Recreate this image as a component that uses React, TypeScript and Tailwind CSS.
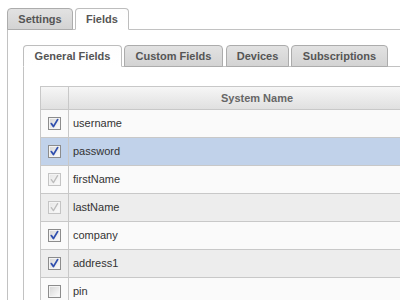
import React from "react";

type Row = { name: string; state: "checked" | "disabled" | "unchecked"; selected?: boolean };

const rows: Row[] = [
  { name: "username", state: "checked" },
  { name: "password", state: "checked", selected: true },
  { name: "firstName", state: "disabled" },
  { name: "lastName", state: "disabled" },
  { name: "company", state: "checked" },
  { name: "address1", state: "checked" },
  { name: "pin", state: "unchecked" },
];

function Check({ state }: { state: Row["state"] }) {
  const disabled = state === "disabled";
  const border = disabled ? "#c4c4c4" : "#8c8c8c";
  const id = disabled ? "gd" : "gn";
  return (
    <svg width="13" height="13" viewBox="0 0 13 13">
      <defs>
        <linearGradient id={id} x1="0" y1="0" x2="1" y2="1">
          <stop offset="0" stopColor={disabled ? "#e6e6e6" : "#d6d6d6"} />
          <stop offset="1" stopColor={disabled ? "#fbfbfb" : "#fcfcfc"} />
        </linearGradient>
      </defs>
      <rect x="0.5" y="0.5" width="12" height="12" fill={border} stroke={border} />
      <rect x="1.5" y="1.5" width="10" height="10" fill={`url(#${id})`} stroke="#f4f4f4" strokeWidth="1" />
      {state !== "unchecked" && (
        <path
          d="M3.3 6.6 L5.4 9.6 L9.6 2.6"
          fill="none"
          stroke={disabled ? "#bcbcbc" : "#2f4fae"}
          strokeWidth={disabled ? 1.3 : 1.8}
          strokeLinecap="round"
          strokeLinejoin="round"
        />
      )}
    </svg>
  );
}

function OuterTab({ label, active, w }: { label: string; active?: boolean; w: string }) {
  return (
    <div
      className={
        "relative z-10 flex items-center justify-center rounded-t-[4px] border text-[11px] font-bold text-[#555] " +
        w +
        (active
          ? " h-[22px] border-[#bdbdbd] border-b-white bg-gradient-to-b from-[#fdfdfd] to-white"
          : " h-[22px] border-[#acacac] bg-gradient-to-b from-[#e2e2e2] to-[#d3d3d3]")
      }
    >
      <span className="pt-[1px]">{label}</span>
    </div>
  );
}

export default function App() {
  return (
    <div
      className="w-[400px] h-[300px] overflow-hidden bg-white"
      style={{ fontFamily: '"Liberation Sans", Arial, sans-serif' }}
    >
      <div className="w-[460px]">
        {/* outer tabs */}
        <div className="flex items-start pl-[7px] pt-[8px]">
          <OuterTab label="Settings" w="w-[66px]" />
          <div className="w-[2px]" />
          <OuterTab label="Fields" active w="w-[54px]" />
        </div>
        <div className="ml-[7px] -mt-px border-l border-t border-[#c2c2c2] pl-[15px] pt-[15px] h-[300px]">
          {/* inner tabs */}
          <div className="flex items-start">
            <OuterTab label="General Fields" active w="w-[99px]" />
            <div className="w-[2px]" />
            <OuterTab label="Custom Fields" w="w-[99px]" />
            <div className="w-[3px]" />
            <OuterTab label="Devices" w="w-[63px]" />
            <div className="w-[2px]" />
            <OuterTab label="Subscriptions" w="w-[97px]" />
          </div>
          <div className="-mt-px border-l border-t border-[#c2c2c2] pl-[16px] pt-[19px] h-[300px]">
            <div className="w-[405px] border-l border-[#c8c8c8]">
              <div className="flex h-[24px] border-t border-b border-[#c8c8c8] bg-gradient-to-b from-[#f6f6f6] to-[#e0e0e0]">
                <div className="w-[28px] shrink-0 border-r border-[#c8c8c8]" />
                <div className="flex-1 flex items-center justify-center text-[11px] font-bold text-[#666]">
                  System Name
                </div>
              </div>
              {rows.map((r, i) => {
                const bg = r.selected ? "bg-[#c1d2ea]" : i % 2 === 0 ? "bg-[#fafafa]" : "bg-[#ededed]";
                return (
                  <div key={r.name} className={"flex h-[28px] border-b border-[#c8c8c8] " + bg}>
                    <div className="w-[28px] shrink-0 border-r border-[#c8c8c8] flex items-center justify-center">
                      <Check state={r.state} />
                    </div>
                    <div className="flex-1 flex items-center pl-[4px] text-[11px] text-[#333]">{r.name}</div>
                  </div>
                );
              })}
            </div>
          </div>
        </div>
      </div>
    </div>
  );
}
